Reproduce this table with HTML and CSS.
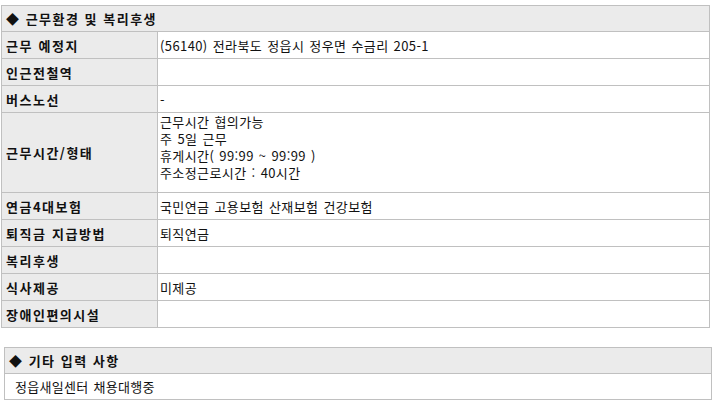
FILE: index.html
```html
<!DOCTYPE html>
<html lang="ko">
<head>
<meta charset="utf-8">
<link rel="stylesheet" href="styles.css">
</head>
<body>
<div class="page">
  <table class="info first">
    <colgroup><col class="col-label"><col class="col-value"></colgroup>
    <tr><th class="head" colspan="2">◆ 근무환경 및 복리후생</th></tr>
    <tr><th class="label">근무 예정지</th><td>(56140) 전라북도 정읍시 정우면 수금리 205-1</td></tr>
    <tr><th class="label">인근전철역</th><td></td></tr>
    <tr><th class="label">버스노선</th><td>-</td></tr>
    <tr class="tall"><th class="label">근무시간/형태</th><td class="multi">근무시간 협의가능<br>주 5일 근무<br>휴게시간( 99:99 ~ 99:99 )<br>주소정근로시간 : 40시간</td></tr>
    <tr><th class="label">연금4대보험</th><td>국민연금 고용보험 산재보험 건강보험</td></tr>
    <tr><th class="label">퇴직금 지급방법</th><td>퇴직연금</td></tr>
    <tr><th class="label">복리후생</th><td></td></tr>
    <tr><th class="label">식사제공</th><td>미제공</td></tr>
    <tr><th class="label">장애인편의시설</th><td></td></tr>
  </table>
  <table class="info second">
    <tr><th class="head">◆ 기타 입력 사항</th></tr>
    <tr><td class="note">정읍새일센터 채용대행중</td></tr>
  </table>
</div>
</body>
</html>
```
FILE: styles.css
```css
html, body {
  margin: 0;
  padding: 0;
  background: #ffffff;
}
body {
  font-family: "Noto Sans CJK KR", "Noto Sans", sans-serif;
  font-size: 13px;
  color: #111111;
}
.page {
  padding: 5px 0 0 1px;
}
.info {
  border-collapse: collapse;
  table-layout: fixed;
}
.first {
  width: 709px;
}
.col-label {
  width: 156px;
}
.second {
  width: 708px;
  margin: 19px 0 0 3px;
}
.info th, .info td {
  border: 1px solid #c0c0c0;
  height: 26px;
  padding: 0 2px;
  text-align: left;
  vertical-align: middle;
  line-height: 17px;
  box-sizing: border-box;
  word-spacing: 1px;
  letter-spacing: 0.4px;
}
.head {
  background: #ebebeb;
  font-weight: bold;
  padding-left: 4px !important;
  letter-spacing: 1.5px !important;
  word-spacing: 0 !important;
}
.label {
  background: #ebebeb;
  font-weight: bold;
  padding-left: 4px !important;
  letter-spacing: 1.5px !important;
  word-spacing: 0.5px !important;
}
.first tr:not(:first-child) {
  height: 27px;
}
.first tr.tall td, .first tr.tall th {
  height: 80px;
}
.first td.multi {
  vertical-align: top;
  padding-top: 0;
}
.note {
  padding-left: 10px !important;
  letter-spacing: 0.3px !important;
}
```
